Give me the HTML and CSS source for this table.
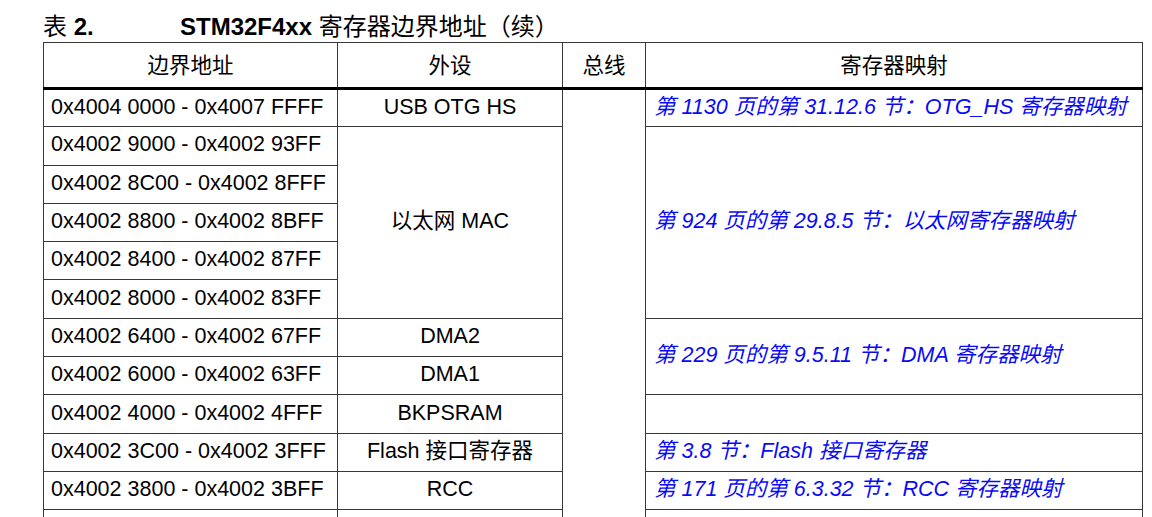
FILE: index.html
```html
<!DOCTYPE html>
<html lang="zh-CN">
<head>
<meta charset="utf-8">
<title>STM32F4xx 寄存器边界地址（续）</title>
<link rel="stylesheet" href="styles.css">
</head>
<body>
<div class="page">
  <div class="caption">
    <span class="cap-label">表 <b>2.</b></span>
    <span class="cap-title"><b>STM32F4xx</b> 寄存器边界地址（续）</span>
  </div>
  <table class="regtable">
    <colgroup>
      <col class="c-addr"><col class="c-per"><col class="c-bus"><col class="c-map">
    </colgroup>
    <thead>
      <tr class="head">
        <th>边界地址</th><th>外设</th><th>总线</th><th>寄存器映射</th>
      </tr>
    </thead>
    <tbody>
      <tr>
        <td class="addr">0x4004 0000 - 0x4007 FFFF</td>
        <td class="per">USB OTG HS</td>
        <td class="bus" rowspan="12"></td>
        <td class="map"><span class="link">第 1130 页的第 31.12.6 节：OTG_HS 寄存器映射</span></td>
      </tr>
      <tr>
        <td class="addr">0x4002 9000 - 0x4002 93FF</td>
        <td class="per" rowspan="5">以太网 MAC</td>
        <td class="map" rowspan="5"><span class="link">第 924 页的第 29.8.5 节：以太网寄存器映射</span></td>
      </tr>
      <tr><td class="addr">0x4002 8C00 - 0x4002 8FFF</td></tr>
      <tr><td class="addr">0x4002 8800 - 0x4002 8BFF</td></tr>
      <tr><td class="addr">0x4002 8400 - 0x4002 87FF</td></tr>
      <tr><td class="addr">0x4002 8000 - 0x4002 83FF</td></tr>
      <tr>
        <td class="addr">0x4002 6400 - 0x4002 67FF</td>
        <td class="per">DMA2</td>
        <td class="map" rowspan="2"><span class="link">第 229 页的第 9.5.11 节：DMA 寄存器映射</span></td>
      </tr>
      <tr>
        <td class="addr">0x4002 6000 - 0x4002 63FF</td>
        <td class="per">DMA1</td>
      </tr>
      <tr>
        <td class="addr">0x4002 4000 - 0x4002 4FFF</td>
        <td class="per">BKPSRAM</td>
        <td class="map"></td>
      </tr>
      <tr>
        <td class="addr">0x4002 3C00 - 0x4002 3FFF</td>
        <td class="per">Flash 接口寄存器</td>
        <td class="map"><span class="link">第 3.8 节：Flash 接口寄存器</span></td>
      </tr>
      <tr>
        <td class="addr">0x4002 3800 - 0x4002 3BFF</td>
        <td class="per">RCC</td>
        <td class="map"><span class="link">第 171 页的第 6.3.32 节：RCC 寄存器映射</span></td>
      </tr>
      <tr>
        <td class="addr"></td>
        <td class="per"></td>
        <td class="map"></td>
      </tr>
    </tbody>
  </table>
</div>
</body>
</html>
```

FILE: styles.css
```css
html, body {
  margin: 0;
  padding: 0;
  background: #ffffff;
  overflow: hidden;
}

body {
  font-family: "Liberation Sans", "Noto Sans CJK SC", sans-serif;
  color: #000000;
}

.page {
  padding: 12px 0 0 43px;
  width: 1099px;
}

.caption {
  display: flex;
  align-items: baseline;
  font-size: 24px;
  line-height: 30px;
  height: 30px;
}

.cap-label {
  width: 137px;
  flex: none;
}

.cap-title b,
.cap-label b {
  font-weight: bold;
}

.regtable {
  border-collapse: collapse;
  table-layout: fixed;
  width: 1099px;
  font-size: 21.5px;
}

.c-addr { width: 294px; }
.c-per { width: 225px; }
.c-bus { width: 83px; }
.c-map { width: 497px; }

.regtable th,
.regtable td {
  border: 1px solid #383838;
  padding: 0 8px;
  line-height: 24px;
  vertical-align: middle;
  white-space: nowrap;
  overflow: hidden;
}

.regtable th {
  font-weight: normal;
  text-align: center;
  height: 42px;
  padding-top: 2px;
  border-bottom: 3px solid #000000;
}

.regtable tbody tr {
  height: 38.3px;
}

.regtable td.addr {
  text-align: left;
  padding-left: 7px;
  padding-bottom: 3px;
}

.regtable td.per {
  text-align: center;
  padding-bottom: 3px;
}

.regtable td.map {
  text-align: left;
  padding-bottom: 3px;
}

.link {
  color: #0a0af5;
  font-style: italic;
}
```
